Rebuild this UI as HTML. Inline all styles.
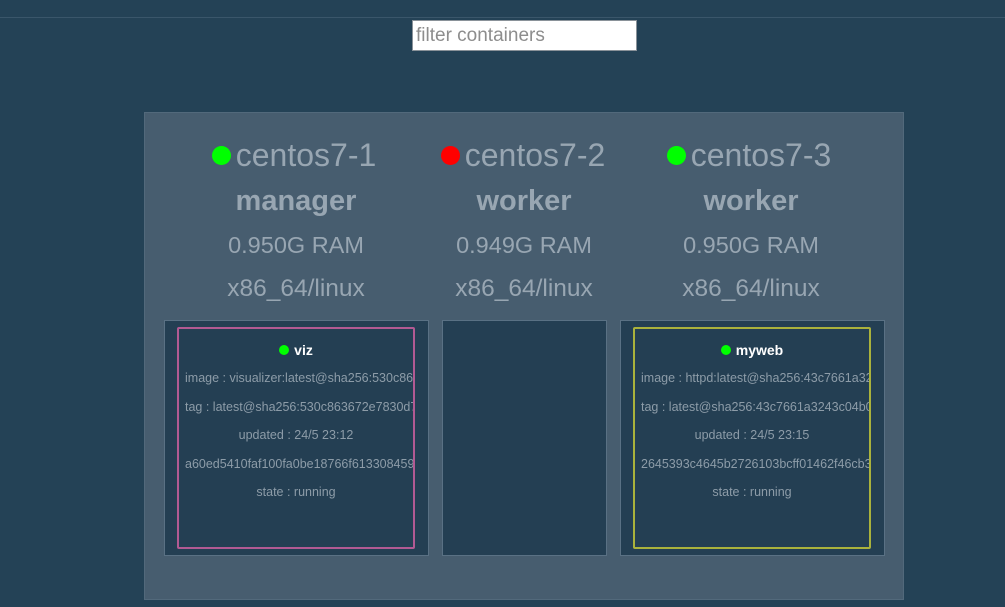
<!DOCTYPE html>
<html><head><style>
body{margin:0;width:1005px;height:607px;background:#244256;font-family:"Liberation Sans",sans-serif;position:relative;overflow:hidden}
.topline{position:absolute;left:0;top:17px;width:1005px;height:1px;background:#3a566a}
.filter{position:absolute;left:412px;top:20px;width:225px;height:31px;background:#fff;border:1px solid #8a9299;box-sizing:border-box;color:#8d8d8d;font-size:19px;line-height:30px;padding-left:3px}
.panel{position:absolute;left:144px;top:112px;width:760px;height:488px;background:#475d6f;border:1px solid #52697b;box-sizing:border-box}
.h{position:absolute;width:300px;text-align:center;color:#98a6b2;white-space:nowrap}
.name{font-size:32px;top:137px}
.role{font-size:29px;font-weight:bold;top:185px}
.ram{font-size:23.5px;top:232px}
.arch{font-size:24.5px;top:275px}
.dot{display:inline-block;width:19px;height:19px;border-radius:50%;margin-right:5px;vertical-align:1px}
.col{position:absolute;top:320px;height:236px;background:#243f53;border:1px solid #5a7184;box-sizing:border-box}
.box{position:absolute;top:327px;height:222px;width:238px;border:2px solid;box-sizing:border-box;border-radius:2px;overflow:hidden;color:#8d9ca8;font-size:12.5px;text-align:center}
.box .t{color:#fff;font-weight:bold;font-size:14px;margin-top:13px;height:22px}
.box .t span{display:inline-block;width:10px;height:10px;border-radius:50%;background:#0f0;margin-right:5px}
.box div.l{height:28.5px;line-height:28.5px;white-space:nowrap}
.box div.la{text-align:left;padding-left:6px}
</style></head><body>
<div class="topline"></div>
<div class="filter">filter containers</div>
<div class="panel"></div>
<div class="h name" style="left:144px"><span class="dot" style="background:#0f0"></span>centos7-1</div>
<div class="h role" style="left:146px">manager</div>
<div class="h ram" style="left:146px">0.950G RAM</div>
<div class="h arch" style="left:146px">x86_64/linux</div>
<div class="h name" style="left:373px"><span class="dot" style="background:#f00"></span>centos7-2</div>
<div class="h role" style="left:374px">worker</div>
<div class="h ram" style="left:374px">0.949G RAM</div>
<div class="h arch" style="left:374px">x86_64/linux</div>
<div class="h name" style="left:599px"><span class="dot" style="background:#0f0"></span>centos7-3</div>
<div class="h role" style="left:601px">worker</div>
<div class="h ram" style="left:601px">0.950G RAM</div>
<div class="h arch" style="left:601px">x86_64/linux</div>
<div class="col" style="left:164px;width:265px"></div>
<div class="col" style="left:442px;width:165px"></div>
<div class="col" style="left:620px;width:265px"></div>
<div class="box" style="left:177px;border-color:#b25a93">
<div class="t"><span></span>viz</div>
<div class="l la">image : visualizer:latest@sha256:530c863672e7830d75</div>
<div class="l la">tag : latest@sha256:530c863672e7830d75a</div>
<div class="l">updated : 24/5 23:12</div>
<div class="l la">a60ed5410faf100fa0be18766f613308459c</div>
<div class="l">state : running</div>
</div>
<div class="box" style="left:633px;border-color:#aab23c">
<div class="t"><span></span>myweb</div>
<div class="l la">image : httpd:latest@sha256:43c7661a3243c</div>
<div class="l la">tag : latest@sha256:43c7661a3243c04b09</div>
<div class="l">updated : 24/5 23:15</div>
<div class="l la">2645393c4645b2726103bcff01462f46cb3a</div>
<div class="l">state : running</div>
</div>
</body></html>
